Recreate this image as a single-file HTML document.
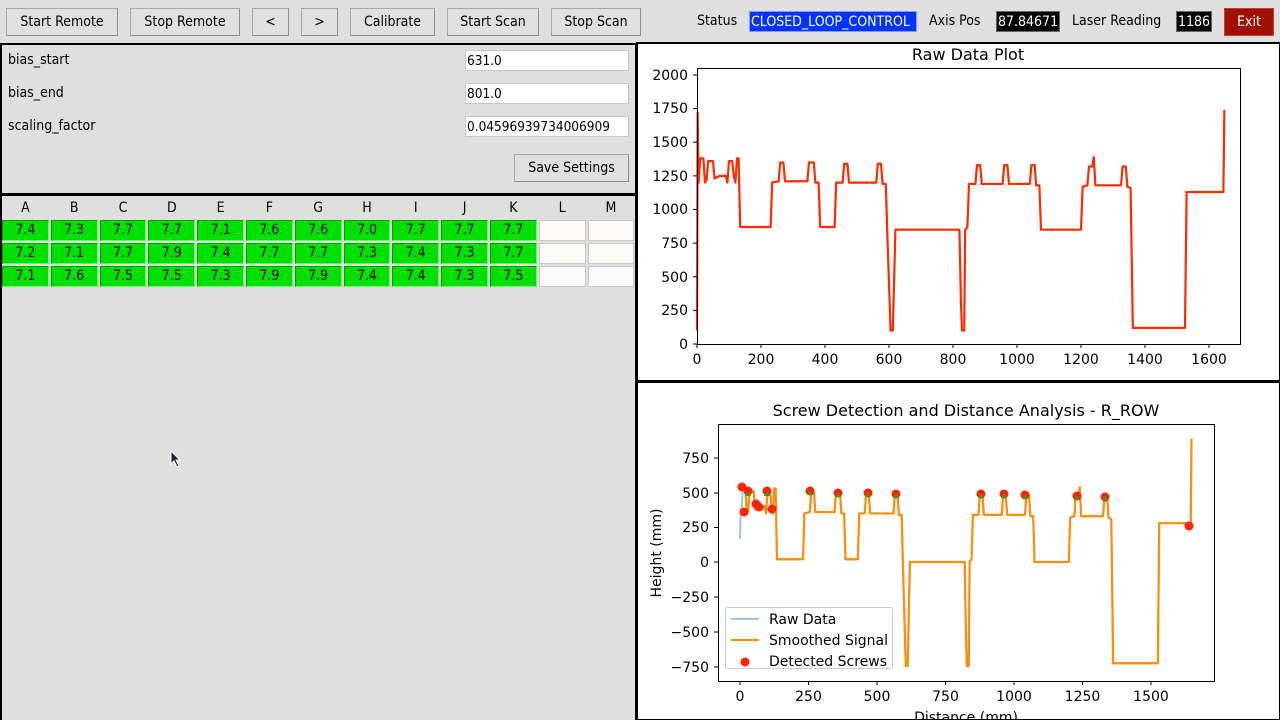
<!DOCTYPE html>
<html><head><meta charset="utf-8"><style>
*{box-sizing:border-box;margin:0;padding:0}
body{width:1280px;height:720px;background:#dfdfdf;font-family:"DejaVu Sans Condensed","DejaVu Sans","Liberation Sans",sans-serif;font-stretch:condensed;font-size:14px;color:#000;position:relative;overflow:hidden}
.a{position:absolute}
.btn{position:absolute;top:8px;height:28px;background:#e0e0e0;border:1px solid #a8a8a8;border-right-color:#909090;border-bottom-color:#909090;display:flex;align-items:center;justify-content:center;font-size:14px}
.lbl{position:absolute;top:12px;font-size:14px}
.box{position:absolute;top:11px;height:21px;display:flex;align-items:center;padding-left:1px;font-size:14px;color:#fff;border:1px solid #666;white-space:nowrap;overflow:hidden}
.inp{position:absolute;left:465px;width:164px;height:21px;background:#fff;border:1px solid #c8c8c8;font-size:13.5px;padding-left:1px;line-height:20px}
.grid{position:absolute;left:2px;top:198px;display:grid;grid-template-columns:repeat(13,46.8px);column-gap:2px;row-gap:2px}
.h{height:20px;text-align:center;line-height:20px}
.c{height:21px;background:#00e000;border:1px solid #00a000;border-right-color:#60ff60;border-bottom-color:#60ff60;text-align:center;line-height:19px}
.e{height:21px;background:#fffafa;border:1px solid #c8c8c8}
svg text{font-family:"DejaVu Sans","Liberation Sans",sans-serif;font-stretch:normal}
</style></head><body>
<div class="btn" style="left:6px;width:112px">Start Remote</div>
<div class="btn" style="left:130px;width:110px">Stop Remote</div>
<div class="btn" style="left:252px;width:37px">&lt;</div>
<div class="btn" style="left:301px;width:37px">&gt;</div>
<div class="btn" style="left:350px;width:85px">Calibrate</div>
<div class="btn" style="left:447px;width:92px">Start Scan</div>
<div class="btn" style="left:551px;width:90px">Stop Scan</div>
<div class="lbl" style="left:697px;top:13px">Status</div>
<div class="box" style="left:749px;width:168px;background:#0033ff;border-color:#8899ff">CLOSED_LOOP_CONTROL</div>
<div class="lbl" style="left:929px;top:13px">Axis Pos</div>
<div class="box" style="left:996px;width:64px;background:#000">87.84671</div>
<div class="lbl" style="left:1072px;top:13px">Laser Reading</div>
<div class="box" style="left:1176px;width:36px;background:#000">1186</div>
<div class="btn" style="left:1224px;width:50px;background:#a01000;color:#fff;border-color:#c04030">Exit</div>

<div class="a" style="left:0;top:43px;width:637px;height:677px;border:2px solid #000;border-bottom:none"></div>
<div class="a" style="left:0;top:193px;width:637px;height:3px;background:#000"></div>
<div class="a" style="left:8px;top:52px">bias_start</div>
<div class="a" style="left:8px;top:85px">bias_end</div>
<div class="a" style="left:8px;top:118px">scaling_factor</div>
<div class="inp" style="top:50px">631.0</div>
<div class="inp" style="top:83px">801.0</div>
<div class="inp" style="top:116px">0.04596939734006909</div>
<div class="btn" style="left:514px;top:154px;width:115px">Save Settings</div>

<div class="grid">
<div class="h">A</div><div class="h">B</div><div class="h">C</div><div class="h">D</div><div class="h">E</div><div class="h">F</div><div class="h">G</div><div class="h">H</div><div class="h">I</div><div class="h">J</div><div class="h">K</div><div class="h">L</div><div class="h">M</div>
<div class="c">7.4</div><div class="c">7.3</div><div class="c">7.7</div><div class="c">7.7</div><div class="c">7.1</div><div class="c">7.6</div><div class="c">7.6</div><div class="c">7.0</div><div class="c">7.7</div><div class="c">7.7</div><div class="c">7.7</div><div class="e"></div><div class="e"></div>
<div class="c">7.2</div><div class="c">7.1</div><div class="c">7.7</div><div class="c">7.9</div><div class="c">7.4</div><div class="c">7.7</div><div class="c">7.7</div><div class="c">7.3</div><div class="c">7.4</div><div class="c">7.3</div><div class="c">7.7</div><div class="e"></div><div class="e"></div>
<div class="c">7.1</div><div class="c">7.6</div><div class="c">7.5</div><div class="c">7.5</div><div class="c">7.3</div><div class="c">7.9</div><div class="c">7.9</div><div class="c">7.4</div><div class="c">7.4</div><div class="c">7.3</div><div class="c">7.5</div><div class="e"></div><div class="e"></div>
</div>
<svg class="a" style="left:170px;top:450px" width="12" height="18"><path d="M1 1 L1 14 L4 11 L7 17 L9 16 L6 10 L10 10 Z" fill="#223" stroke="#fff" stroke-width="1"/></svg>

<svg class="a" style="left:0;top:0" width="1280" height="720">
<rect x="637" y="43" width="643" height="339" fill="#fff" stroke="#000" stroke-width="2"/>
<rect x="637" y="382" width="643" height="338" fill="#fff" stroke="#000" stroke-width="2"/>
<rect x="636" y="380" width="644" height="3" fill="#000"/>
<!-- raw plot -->
<text x="968" y="60" font-size="16" text-anchor="middle">Raw Data Plot</text>
<g transform="translate(697,344) scale(0.32,-0.1345)"><polyline vector-effect="non-scaling-stroke" stroke="#ff2a00" stroke-width="2.2" fill="none" stroke-linejoin="round" points="0,100 2,1720 5,1200 10,1380 20,1380 25,1200 30,1220 35,1360 50,1360 55,1230 70,1250 90,1250 95,1200 100,1360 110,1360 115,1250 120,1200 125,1380 130,1380 135,870 230,870 235,1200 255,1210 260,1350 270,1350 275,1210 345,1210 350,1350 365,1350 370,1200 380,1200 385,870 430,870 435,1200 455,1200 460,1340 470,1340 475,1200 560,1200 565,1340 575,1340 580,1190 590,1190 595,800 605,100 612,100 620,850 820,850 825,300 828,100 835,100 838,850 845,870 850,1190 870,1190 875,1330 885,1330 890,1190 955,1190 960,1330 970,1330 975,1190 1040,1190 1045,1330 1055,1330 1060,1180 1070,1180 1075,850 1200,850 1205,1170 1220,1180 1225,1320 1235,1320 1240,1390 1245,1180 1325,1180 1330,1320 1340,1320 1345,1170 1355,1160 1362,120 1525,120 1530,1130 1645,1130 1648,1740"/></g>
<rect x="697.5" y="68.5" width="543" height="276" fill="none" stroke="#000"/>
<g font-size="14" text-anchor="end">
<text x="688" y="349">0</text><text x="688" y="315">250</text><text x="688" y="282">500</text><text x="688" y="248">750</text><text x="688" y="214">1000</text><text x="688" y="181">1250</text><text x="688" y="147">1500</text><text x="688" y="113">1750</text><text x="688" y="80">2000</text>
</g>
<g stroke="#000"><path d="M693 344h4M693 310.4h4M693 276.8h4M693 243.1h4M693 209.5h4M693 175.9h4M693 142.3h4M693 108.6h4M693 75h4M697 344v4M761 344v4M825 344v4M889 344v4M953 344v4M1017 344v4M1081 344v4M1145 344v4M1209 344v4"/></g>
<g font-size="14" text-anchor="middle">
<text x="697" y="364">0</text><text x="761" y="364">200</text><text x="825" y="364">400</text><text x="889" y="364">600</text><text x="953" y="364">800</text><text x="1017" y="364">1000</text><text x="1081" y="364">1200</text><text x="1145" y="364">1400</text><text x="1209" y="364">1600</text>
</g>
<!-- screw plot -->
<text x="966" y="416" font-size="16" text-anchor="middle">Screw Detection and Distance Analysis - R_ROW</text>
<g transform="translate(740,562) scale(0.274,-0.1387) translate(0,-850)" fill="none" stroke-linejoin="round">
<polyline vector-effect="non-scaling-stroke" stroke="#9ec5e0" stroke-width="2" points="0,1020 2,1200 5,1200 10,1380 20,1380 25,1200 30,1220 35,1360 50,1360 55,1230 70,1250 90,1250 95,1200 100,1360 110,1360 115,1250 120,1200 125,1380 130,1380 135,870 230,870 235,1200 255,1210 260,1350 270,1350 275,1210 345,1210 350,1350 365,1350 370,1200 380,1200 385,870 430,870 435,1200 455,1200 460,1340 470,1340 475,1200 560,1200 565,1340 575,1340 580,1190 590,1190 595,800 605,100 612,100 620,850 820,850 825,300 828,100 835,100 838,850 845,870 850,1190 870,1190 875,1330 885,1330 890,1190 955,1190 960,1330 970,1330 975,1190 1040,1190 1045,1330 1055,1330 1060,1180 1070,1180 1075,850 1200,850 1205,1170 1220,1180 1225,1320 1235,1320 1240,1390 1245,1180 1325,1180 1330,1320 1340,1320 1345,1170 1355,1160 1362,120 1525,120 1530,1130 1645,1130 1648,1740"/>
<polyline vector-effect="non-scaling-stroke" stroke="#ff8c0a" stroke-width="2.2" points="10,1380 20,1380 25,1200 30,1220 35,1360 50,1360 55,1230 70,1250 90,1250 95,1200 100,1360 110,1360 115,1250 120,1200 125,1380 130,1380 135,870 230,870 235,1200 255,1210 260,1350 270,1350 275,1210 345,1210 350,1350 365,1350 370,1200 380,1200 385,870 430,870 435,1200 455,1200 460,1340 470,1340 475,1200 560,1200 565,1340 575,1340 580,1190 590,1190 595,800 605,100 612,100 620,850 820,850 825,300 828,100 835,100 838,850 845,870 850,1190 870,1190 875,1330 885,1330 890,1190 955,1190 960,1330 970,1330 975,1190 1040,1190 1045,1330 1055,1330 1060,1180 1070,1180 1075,850 1200,850 1205,1170 1220,1180 1225,1320 1235,1320 1240,1390 1245,1180 1325,1180 1330,1320 1340,1320 1345,1170 1355,1160 1362,120 1525,120 1530,1130 1645,1130 1648,1740"/>
</g>
<g fill="#ff2200">
<circle cx="742" cy="487" r="4.5"/><circle cx="744" cy="512" r="4.5"/><circle cx="748" cy="491" r="4.5"/><circle cx="756" cy="504" r="4.5"/><circle cx="759" cy="507" r="4.5"/><circle cx="767" cy="491" r="4.5"/><circle cx="772" cy="509" r="4.5"/><circle cx="810" cy="491" r="4.5"/><circle cx="838" cy="493" r="4.5"/><circle cx="868" cy="493" r="4.5"/><circle cx="896" cy="494" r="4.5"/><circle cx="981" cy="494" r="4.5"/><circle cx="1004" cy="494" r="4.5"/><circle cx="1025" cy="495" r="4.5"/><circle cx="1077" cy="496" r="4.5"/><circle cx="1105" cy="497" r="4.5"/><circle cx="1189" cy="526" r="4.5"/>
</g>
<g fill="#3a9a20">
<path d="M745 496l3-5 3 5zM764 496l3-5 3 5zM807 495l3-5 3 5zM835 497l3-5 3 5zM865 497l3-5 3 5zM893 498l3-5 3 5zM978 498l3-5 3 5zM1001 498l3-5 3 5zM1022 499l3-5 3 5zM1074 500l3-5 3 5zM1102 500l3-5 3 5z"/>
</g>
<rect x="718.5" y="424.5" width="496" height="257" fill="none" stroke="#000"/>
<g stroke="#000"><path d="M714 458h4M714 493h4M714 527.5h4M714 562h4M714 597h4M714 632h4M714 667h4M740 681v4M808.5 681v4M877 681v4M945.5 681v4M1014 681v4M1082.5 681v4M1151 681v4"/></g>
<g font-size="14" text-anchor="end">
<text x="709" y="463">750</text><text x="709" y="498">500</text><text x="709" y="532">250</text><text x="709" y="567">0</text><text x="709" y="602">−250</text><text x="709" y="637">−500</text><text x="709" y="672">−750</text>
</g>
<g font-size="14" text-anchor="middle">
<text x="740" y="701">0</text><text x="808.5" y="701">250</text><text x="877" y="701">500</text><text x="945.5" y="701">750</text><text x="1014" y="701">1000</text><text x="1082.5" y="701">1250</text><text x="1151" y="701">1500</text>
<text x="966" y="722">Distance (mm)</text>
</g>
<text transform="translate(661,553) rotate(-90)" font-size="14" text-anchor="middle">Height (mm)</text>
<rect x="725.5" y="607.5" width="167" height="61" rx="2" fill="#fff" fill-opacity="0.85" stroke="#ccc"/>
<path d="M731 619h28" stroke="#9ec5e0" stroke-width="2"/>
<path d="M731 640h28" stroke="#ff8c0a" stroke-width="2"/>
<circle cx="745" cy="662" r="4.5" fill="#ff2200"/>
<g font-size="14"><text x="769" y="624">Raw Data</text><text x="769" y="645">Smoothed Signal</text><text x="769" y="666">Detected Screws</text></g>
</svg>
</body></html>
